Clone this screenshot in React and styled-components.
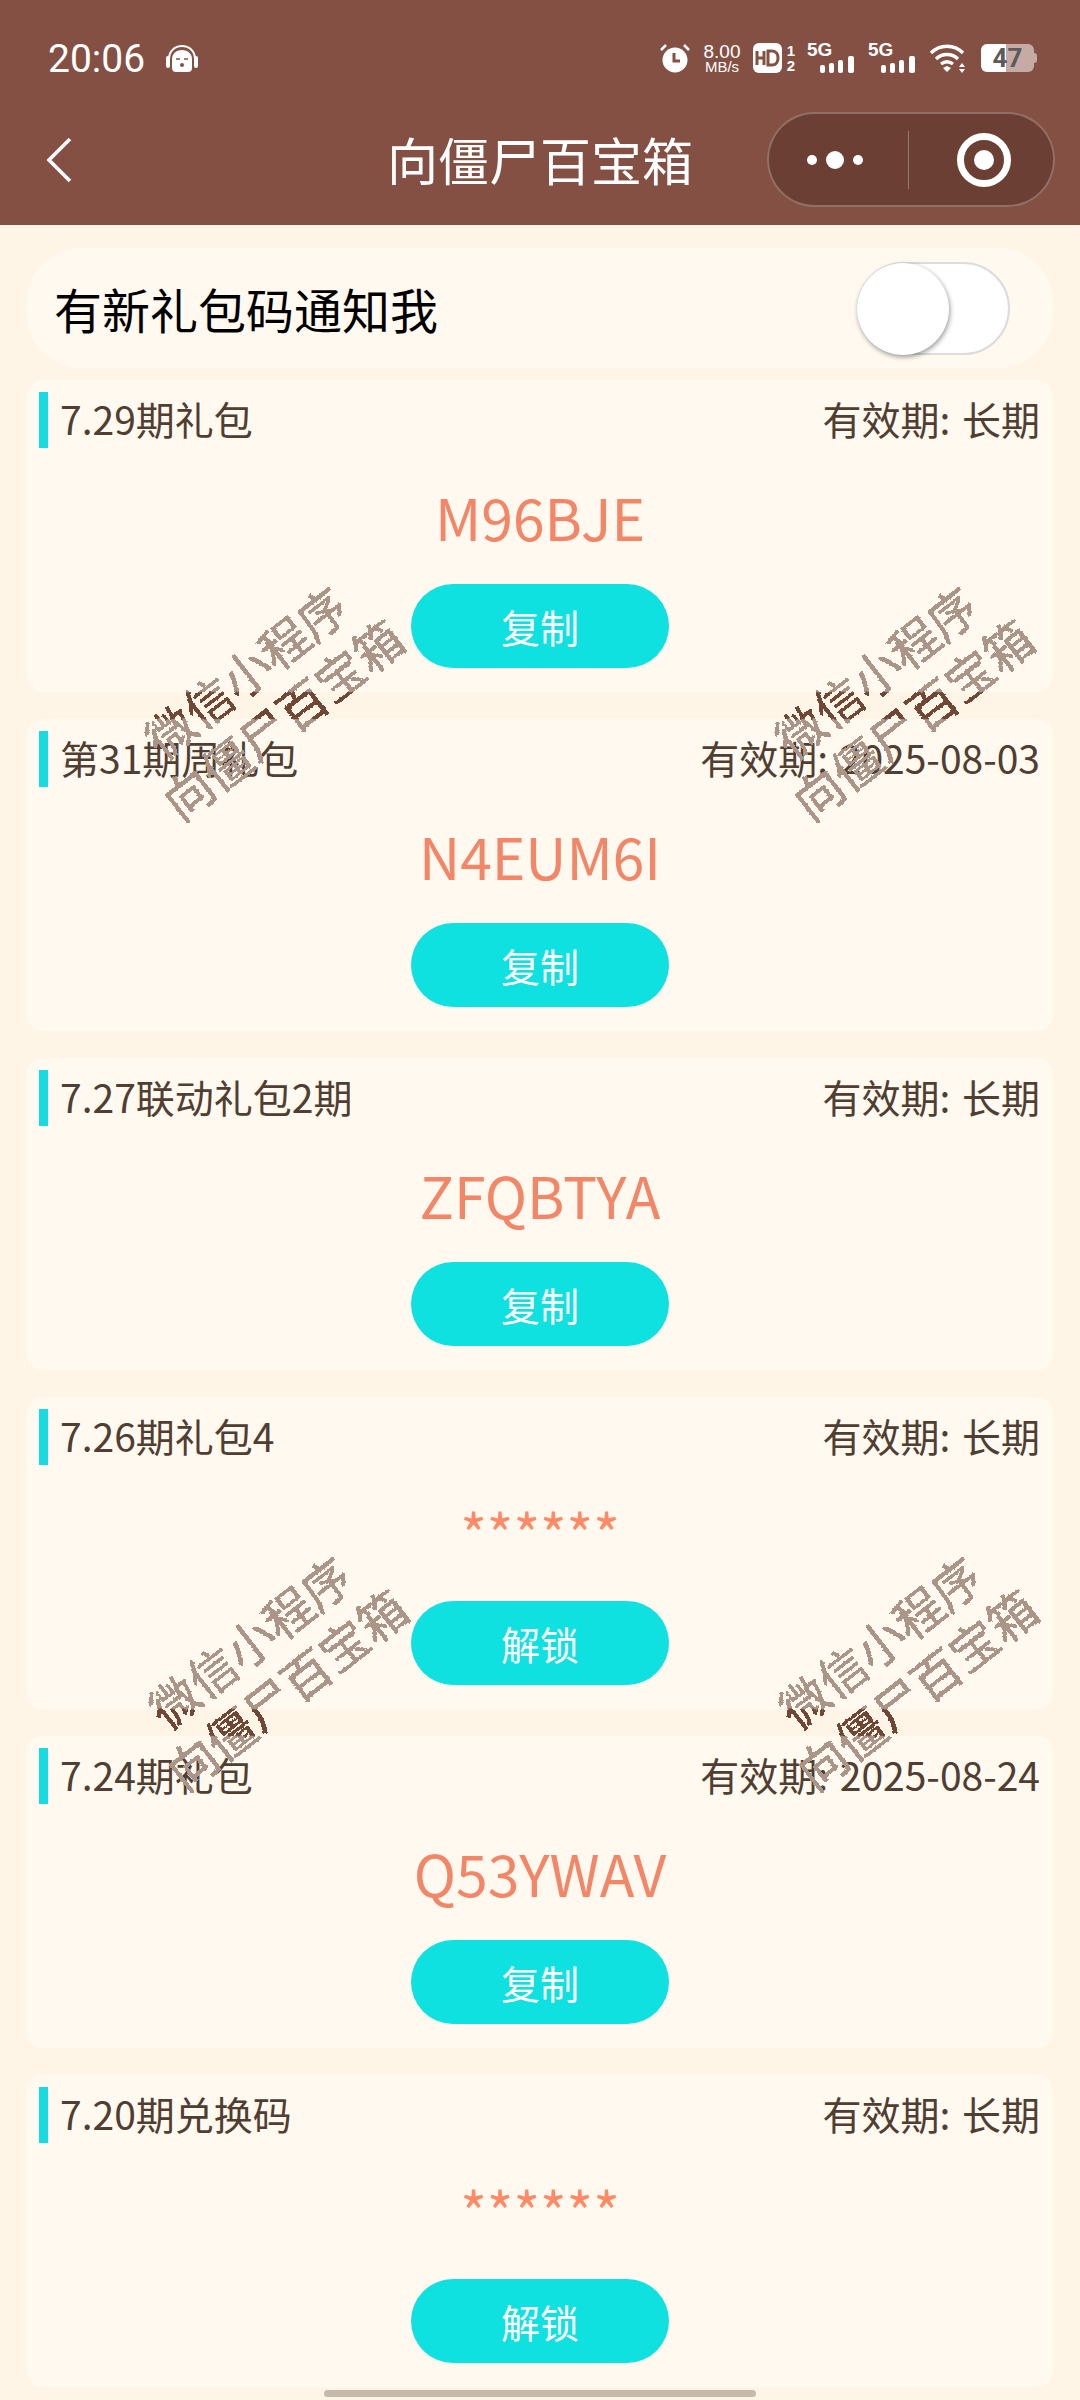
import styled, { createGlobalStyle } from "styled-components"

const GlobalStyle = createGlobalStyle`
  html, body {
    margin: 0;
    padding: 0;
    background: #fff5e7;
    font-family: "Noto Sans CJK SC", "Noto Sans", sans-serif;
  }
  * { box-sizing: border-box; }
`

const Page = styled.div`
  position: relative;
  width: 1080px;
  height: 2400px;
  overflow: hidden;
  background: #fff5e7;
`

const Header = styled.header`
  height: 225px;
  background: #855044;
  color: #fff;
`

const StatusBar = styled.div`
  height: 112px;
  padding: 36px 46px 0 48px;
  display: flex;
  justify-content: space-between;
  align-items: flex-start;
`

const StatusLeft = styled.div`
  display: flex;
  align-items: center;
  gap: 21px;
`

const Time = styled.span`
  font-family: Roboto, sans-serif;
  font-size: 39px;
  line-height: 46px;
`

const StatusRight = styled.div`
  display: flex;
  align-items: center;
  height: 44px;
`

const Speed = styled.div`
  width: 40px;
  margin: 0 11px 0 11px;
  font-family: "Liberation Sans", sans-serif;
  font-size: 15px;
  line-height: 14px;
  text-align: center;
  & b { display: block; font-size: 19px; line-height: 17px; font-weight: 400; }
`

const HdCell = styled.div`
  display: flex;
  align-items: center;
  gap: 3px;
`

const SimSlots = styled.div`
  width: 12px;
  display: flex;
  flex-direction: column;
  font-family: "Liberation Sans", sans-serif;
  font-size: 15px;
  font-weight: 700;
  line-height: 15px;
  text-align: center;
`

const SignalCell = styled.div`
  position: relative;
  width: 48px;
  height: 30px;
  margin-left: ${(p) => p.$gap}px;
`

const SignalLabel = styled.span`
  position: absolute;
  left: 0;
  top: -3px;
  font-family: "Liberation Sans", sans-serif;
  font-size: 19px;
  font-weight: 700;
  line-height: 19px;
`

const Battery = styled.div`
  position: relative;
  width: 53px;
  height: 28px;
  margin-left: 14px;
  border-radius: 6px;
  background: linear-gradient(90deg, #fff 47%, #c5aba4 47%);
  color: #5b5b5b;
  font-family: Roboto, sans-serif;
  font-size: 26px;
  font-weight: 700;
  line-height: 28px;
  text-align: center;
  &::after {
    content: "";
    position: absolute;
    right: -3px;
    top: 9px;
    width: 3px;
    height: 10px;
    border-radius: 0 3px 3px 0;
    background: #c5aba4;
  }
`

const NavBar = styled.div`
  height: 95px;
  padding: 0 25px;
  display: grid;
  grid-template-columns: 288px 1fr 288px;
  align-items: center;
`

const NavBack = styled.div`
  padding-left: 21px;
  display: flex;
  align-items: center;
`

const NavTitle = styled.h1`
  margin: 0;
  font-size: 51px;
  font-weight: 400;
  line-height: 93px;
  text-align: center;
`

const Capsule = styled.div`
  width: 288px;
  height: 95px;
  border: 2px solid rgba(255, 255, 255, 0.25);
  border-radius: 48px;
  background: #6c3f34;
  display: flex;
  align-items: center;
`

const CapsuleSlot = styled.div`
  flex: 1;
  height: 100%;
  display: flex;
  align-items: center;
  justify-content: center;
`

const RecordSlot = styled(CapsuleSlot)`
  padding-left: 6px;
`

const CapsuleDivider = styled.div`
  width: 1px;
  height: 58px;
  background: rgba(255, 255, 255, 0.3);
`

const List = styled.main`
  padding: 23px 27px 0;
  display: flex;
  flex-direction: column;
`

const NotifyRow = styled.div`
  height: 120px;
  margin-bottom: 12px;
  padding: 0 43px 0 27px;
  border-radius: 55px;
  background: #fff9f0;
  display: flex;
  align-items: center;
  justify-content: space-between;
`

const NotifyLabel = styled.span`
  color: #000;
  font-size: 48px;
  line-height: 60px;
`

const Toggle = styled.div`
  position: relative;
  width: 153px;
  height: 93px;
  border: 2px solid #dcdcdc;
  border-radius: 47px;
  background: #fff;
`

const ToggleKnob = styled.div`
  position: absolute;
  left: -2px;
  top: -1px;
  width: 92px;
  height: 92px;
  border-radius: 50%;
  background: #fff;
  box-shadow: 1px 2px 5px rgba(0, 0, 0, 0.4);
`

const Card = styled.section`
  height: 312px;
  margin-bottom: 27px;
  padding-top: 12px;
  border-radius: 16px;
  background: #fff9f0;
  display: flex;
  flex-direction: column;
  align-items: center;
`

const CardHead = styled.div`
  width: 100%;
  height: 56px;
  padding: 0 13px 0 12px;
  display: flex;
  align-items: center;
  color: #4f3e31;
  font-size: 39px;
`

const CardName = styled.span`
  flex: 1;
  height: 56px;
  padding-left: 12px;
  border-left: 9px solid #16dbe0;
  line-height: 53px;
`

const Expiry = styled.span`
  height: 56px;
  line-height: 53px;
  word-spacing: 3px;
`

const Code = styled.div`
  height: 136px;
  display: flex;
  align-items: center;
  color: #f38667;
  font-size: 57px;
  line-height: 136px;
`

const Masked = styled(Code)`
  color: #ff8a65;
  padding-bottom: 3px;
`

const ActionButton = styled.div`
  width: 258px;
  height: 84px;
  border-radius: 42px;
  background: #0fe0e0;
  color: #fff;
  font-size: 39px;
  line-height: 84px;
  text-align: center;
`

const HomeBar = styled.div`
  position: absolute;
  left: 324px;
  bottom: 3px;
  width: 432px;
  height: 7px;
  border-radius: 4px;
  background: #c4b9aa;
`

// the gradient is turned against the rotation so its band stays level with the gap between two cards
const Watermark = styled.div`
  position: absolute;
  left: ${(p) => p.$x}px;
  top: ${(p) => p.$y}px;
  width: 340px;
  height: 120px;
  margin: -60px 0 0 -170px;
  transform: rotate(-38deg);
  background: linear-gradient(
    218deg,
    #ab9488 0 ${(p) => p.$band}px,
    #6f4635 ${(p) => p.$band}px ${(p) => p.$band + 27}px,
    #ab9488 ${(p) => p.$band + 27}px
  );
  -webkit-background-clip: text;
  background-clip: text;
  color: transparent;
  font-size: 48px;
  line-height: 60px;
  text-align: center;
  white-space: nowrap;
  pointer-events: none;
  filter: url(#jagged);
`

const gifts = [
  { name: "7.29期礼包", expiry: "长期", code: "M96BJE" },
  { name: "第31期周礼包", expiry: "2025-08-03", code: "N4EUM6I" },
  { name: "7.27联动礼包2期", expiry: "长期", code: "ZFQBTYA" },
  { name: "7.26期礼包4", expiry: "长期", locked: true },
  { name: "7.24期礼包", expiry: "2025-08-24", code: "Q53YWAV" },
  { name: "7.20期兑换码", expiry: "长期", locked: true },
]

const marks = [
  { x: 263, y: 694, band: 150 },
  { x: 893, y: 694, band: 150 },
  { x: 267, y: 1664, band: 197 },
  { x: 897, y: 1664, band: 197 },
]

function Headphones() {
  return (
    <svg width="32" height="28" viewBox="0 0 32 28">
      <path d="M3 14C3 6 9 1 16 1s13 5 13 13" fill="none" stroke="#fff" strokeWidth="2" />
      <rect x="0" y="11" width="4" height="12" rx="2" fill="#fff" />
      <rect x="28" y="11" width="4" height="12" rx="2" fill="#fff" />
      <path d="M6 14c0-5 4-9 10-9s10 4 10 9v9c0 3-2 4-4 4H10c-2 0-4-1-4-4z" fill="#fff" />
      <path d="M10 14h4M18 14h4" stroke="#855044" strokeWidth="1.4" />
      <circle cx="16" cy="20" r="2" fill="#855044" />
    </svg>
  )
}

function Alarm() {
  return (
    <svg width="32" height="30" viewBox="0 0 32 30">
      <circle cx="16" cy="17" r="12.5" fill="#fff" />
      <path d="M15 10v8h6" fill="none" stroke="#855044" strokeWidth="3" />
      <path d="M2 7l5-5M30 7l-5-5" stroke="#fff" strokeWidth="2.5" />
    </svg>
  )
}

function HdBadge() {
  return (
    <svg width="29" height="30" viewBox="0 0 29 30">
      <rect width="29" height="30" rx="6" fill="#fff" />
      <path d="M4 8v14M11 8v14M4 15h7" stroke="#855044" strokeWidth="3" fill="none" />
      <path d="M15 8v14h4c4 0 6-3 6-7s-2-7-6-7z" stroke="#855044" strokeWidth="3" fill="none" />
    </svg>
  )
}

function SignalBars() {
  return (
    <svg width="48" height="30" viewBox="0 0 48 30">
      <rect x="13" y="22" width="5" height="8" rx="2" fill="#fff" />
      <rect x="22" y="20" width="5" height="10" rx="2" fill="#fff" />
      <rect x="31" y="17" width="5" height="13" rx="2" fill="#fff" />
      <rect x="41" y="13" width="6" height="17" rx="2" fill="#fff" />
    </svg>
  )
}

function Wifi() {
  return (
    <svg width="38" height="30" viewBox="0 0 38 30" style={{ marginLeft: 13 }}>
      <path d="M2 10C11 1 25 1 34 10M7 16c6-6 16-6 22 0M12 21c4-3 8-3 12 0" fill="none" stroke="#fff" strokeWidth="3.4" />
      <path d="M14 25l4-2 4 2-4 4z" fill="#fff" />
      <path d="M33 20l3 4h-6zM33 30l3-4h-6z" fill="#fff" />
    </svg>
  )
}

function BackIcon() {
  return (
    <svg width="26" height="46" viewBox="0 0 26 46">
      <path d="M24 2L3 23l21 21" fill="none" stroke="#fff" strokeWidth="3.6" />
    </svg>
  )
}

function MoreIcon() {
  return (
    <svg width="62" height="20" viewBox="0 0 62 20">
      <circle cx="5" cy="10" r="5" fill="#fff" />
      <circle cx="28" cy="10" r="9" fill="#fff" />
      <circle cx="51" cy="10" r="5" fill="#fff" />
    </svg>
  )
}

function RecordIcon() {
  return (
    <svg width="54" height="54" viewBox="0 0 54 54">
      <circle cx="27" cy="27" r="23.5" fill="none" stroke="#fff" strokeWidth="7" />
      <circle cx="27" cy="27" r="10" fill="#fff" />
    </svg>
  )
}

export default function App() {
  return (
    <Page>
      <GlobalStyle />
      <svg width="0" height="0" style={{ position: "absolute" }}>
        <filter id="jagged" x="-10%" y="-10%" width="120%" height="120%">
          <feTurbulence type="fractalNoise" baseFrequency="0.6" numOctaves="1" seed="3" result="noise" />
          <feDisplacementMap in="SourceGraphic" in2="noise" scale="3" xChannelSelector="R" yChannelSelector="G" result="moved" />
          <feComponentTransfer in="moved">
            <feFuncA type="discrete" tableValues="0 1 1 1" />
          </feComponentTransfer>
        </filter>
      </svg>
      <Header>
        <StatusBar>
          <StatusLeft>
            <Time>20:06</Time>
            <Headphones />
          </StatusLeft>
          <StatusRight>
            <Alarm />
            <Speed>
              <b>8.00</b>
              MB/s
            </Speed>
            <HdCell>
              <HdBadge />
              <SimSlots>
                <span>1</span>
                <span>2</span>
              </SimSlots>
            </HdCell>
            <SignalCell $gap={10}>
              <SignalLabel>5G</SignalLabel>
              <SignalBars />
            </SignalCell>
            <SignalCell $gap={13}>
              <SignalLabel>5G</SignalLabel>
              <SignalBars />
            </SignalCell>
            <Wifi />
            <Battery>47</Battery>
          </StatusRight>
        </StatusBar>
        <NavBar>
          <NavBack>
            <BackIcon />
          </NavBack>
          <NavTitle>向僵尸百宝箱</NavTitle>
          <Capsule>
            <CapsuleSlot>
              <MoreIcon />
            </CapsuleSlot>
            <CapsuleDivider />
            <RecordSlot>
              <RecordIcon />
            </RecordSlot>
          </Capsule>
        </NavBar>
      </Header>
      <List>
        <NotifyRow>
          <NotifyLabel>有新礼包码通知我</NotifyLabel>
          <Toggle>
            <ToggleKnob />
          </Toggle>
        </NotifyRow>
        {gifts.map((gift) => (
          <Card key={gift.name}>
            <CardHead>
              <CardName>{gift.name}</CardName>
              <Expiry>有效期: {gift.expiry}</Expiry>
            </CardHead>
            {gift.locked ? <Masked>******</Masked> : <Code>{gift.code}</Code>}
            <ActionButton>{gift.locked ? "解锁" : "复制"}</ActionButton>
          </Card>
        ))}
      </List>
      {marks.map((m) => (
        <Watermark key={`${m.x}-${m.y}`} $x={m.x} $y={m.y} $band={m.band}>
          微信小程序
          <br />
          向僵尸百宝箱
        </Watermark>
      ))}
      <HomeBar />
    </Page>
  )
}
